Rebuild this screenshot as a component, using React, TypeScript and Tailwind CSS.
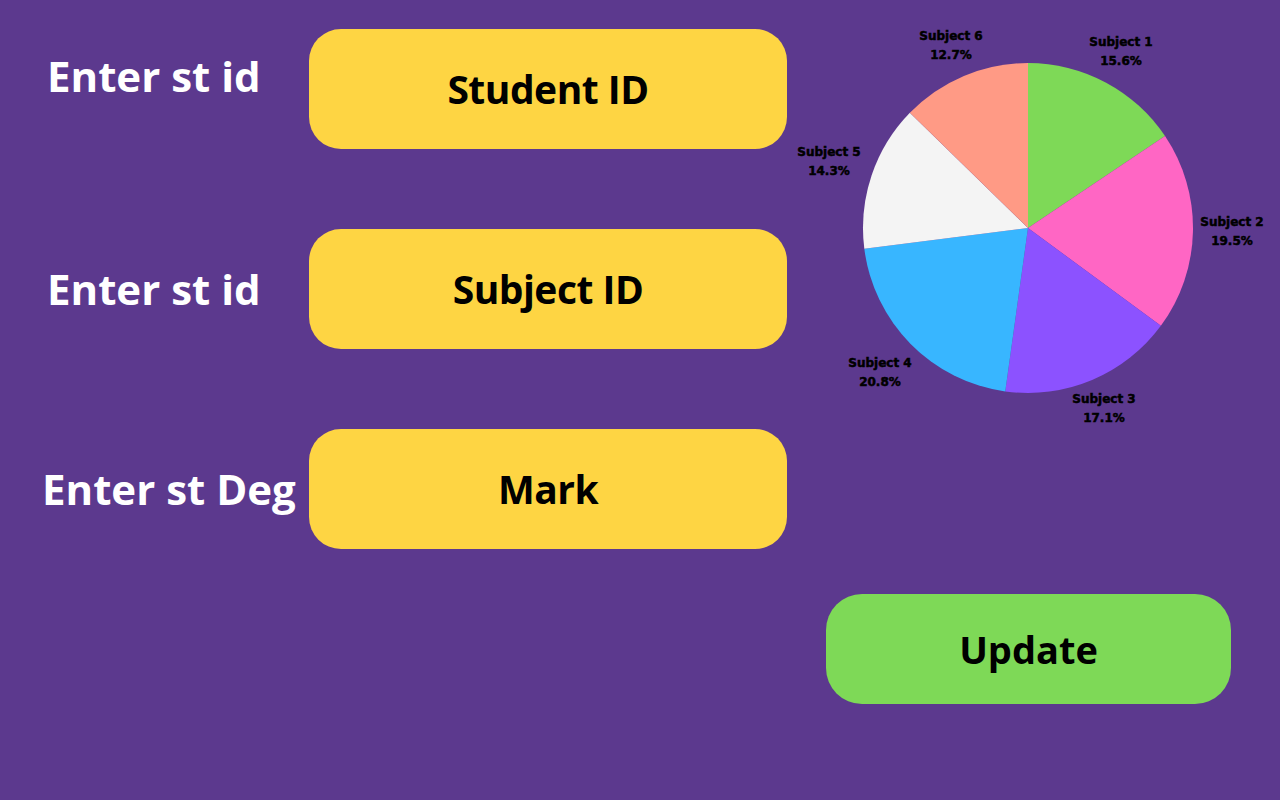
import React from "react";

const OX = 787;
const CX = 1028 - OX;
const CY = 228;
const R = 165;

const slices = [
  { name: "Subject 1", pct: 15.6, color: "#7ed957", lx: 1121, ly: 42 },
  { name: "Subject 2", pct: 19.5, color: "#ff66c4", lx: 1232, ly: 222 },
  { name: "Subject 3", pct: 17.1, color: "#8c52ff", lx: 1104, ly: 399 },
  { name: "Subject 4", pct: 20.8, color: "#38b6ff", lx: 880, ly: 363 },
  { name: "Subject 5", pct: 14.3, color: "#f4f4f4", lx: 829, ly: 152 },
  { name: "Subject 6", pct: 12.7, color: "#ff9a85", lx: 951, ly: 36 },
];

function pt(angleDeg: number) {
  const a = (angleDeg * Math.PI) / 180;
  return [CX + R * Math.sin(a), CY - R * Math.cos(a)];
}

function Pie() {
  let start = 0;
  return (
    <svg width={493} height={440} viewBox="0 0 493 440" className="block">
      {slices.map((s) => {
        const sweep = (s.pct / 100) * 360;
        const [x1, y1] = pt(start);
        const [x2, y2] = pt(start + sweep);
        const large = sweep > 180 ? 1 : 0;
        const d = `M ${CX} ${CY} L ${x1} ${y1} A ${R} ${R} 0 ${large} 1 ${x2} ${y2} Z`;
        start += sweep;
        return <path key={s.name} d={d} fill={s.color} />;
      })}
      {slices.map((s) => (
        <text
          key={s.name + "l"}
          x={s.lx - OX}
          textAnchor="middle"
          fill="#000"
          stroke="#000"
          strokeWidth={0.5}
          style={{ fontFamily: "'DejaVu Sans', 'Liberation Sans', sans-serif", fontWeight: 700, fontSize: 12 }}
        >
          <tspan x={s.lx - OX} y={s.ly} dominantBaseline="central">{s.name}</tspan>
          <tspan x={s.lx - OX} y={s.ly + 18.5} dominantBaseline="central">{s.pct.toFixed(1)}%</tspan>
        </text>
      ))}
    </svg>
  );
}

function Row({ label, value, labelClass }: { label: string; value: string; labelClass: string }) {
  return (
    <div className="flex items-center h-[120px]">
      <div className={"w-[309px] shrink-0 text-white text-[42px] font-bold leading-none " + labelClass}>{label}</div>
      <div className="w-[478px] h-[120px] rounded-[32px] bg-[#fed543] flex items-center justify-center text-black text-[39px] font-bold tracking-[-0.5px]">
        {value}
      </div>
    </div>
  );
}

export default function App() {
  return (
    <div
      className="w-[1280px] h-[800px] bg-[#5c398e] flex overflow-hidden"
      style={{ fontFamily: "'Open Sans', 'Liberation Sans', sans-serif" }}
    >
      <div className="flex flex-col gap-[80px] pt-[29px] w-[787px] shrink-0">
        <Row label="Enter st id" value="Student ID" labelClass="pl-[47px] -mt-[26px]" />
        <Row label="Enter st id" value="Subject ID" labelClass="pl-[47px]" />
        <Row label="Enter st Deg" value="Mark" labelClass="pl-[42px]" />
      </div>
      <div className="flex flex-col">
        <Pie />
        <div className="ml-[39px] mt-[154px] w-[405px] h-[110px] rounded-[36px] bg-[#7ed957] flex items-center justify-center text-black text-[38px] font-bold">
          Update
        </div>
      </div>
    </div>
  );
}
